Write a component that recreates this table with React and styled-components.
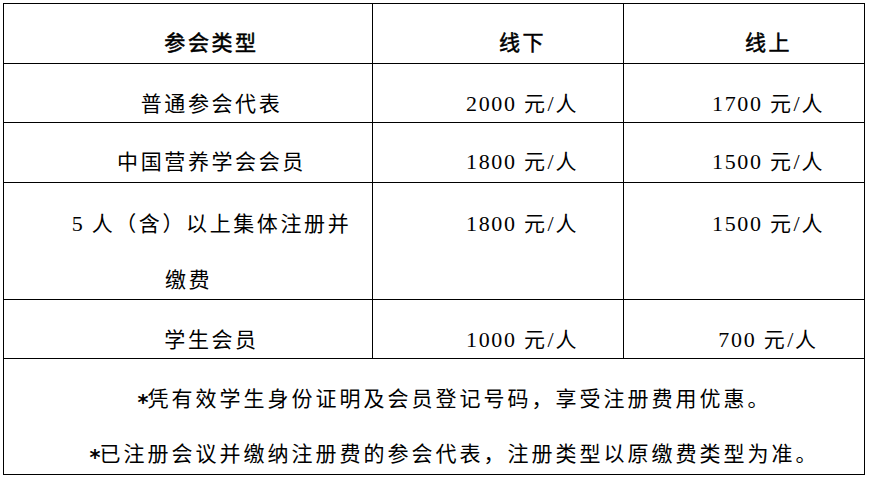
import React from "react";
import styled, { createGlobalStyle } from "styled-components";

const Global = createGlobalStyle`
  html, body { margin: 0; padding: 0; background: #fff; }
  body { font-family: "Noto Sans CJK SC", sans-serif; color: #000; }
`;

const Page = styled.div`
  padding: 3px 0 0 3px;
`;

const Table = styled.div`
  display: grid;
  width: 862px;
  box-sizing: border-box;
  grid-template-columns: 368px 250px 240px;
  grid-template-rows: 59px 58px 59px 116px 58px 115px;
  gap: 1px;
  padding: 1px;
  background: #000;
`;

const Cell = styled.div`
  background: #fff;
  box-sizing: border-box;
  padding: ${(p) => p.$top}px 0 0 ${(p) => p.$indent}px;
  grid-column: ${(p) => (p.$full ? "1 / -1" : "auto")};
  font-family: "Noto Sans CJK SC", sans-serif;
  font-size: 21px;
  line-height: 55px;
  letter-spacing: ${(p) => (p.$full ? 3 : 2.6)}px;
  text-align: center;
  white-space: nowrap;
  font-weight: 400;
  -webkit-text-stroke: ${(p) => (p.$head ? "0.5px #000" : "0")};
`;

const Line = styled.div`
  text-align: ${(p) => (p.$left ? "left" : "center")};
  padding-left: ${(p) => p.$offset || 0}px;
`;

const Num = styled.span`
  font-family: "Liberation Serif", "Times New Roman", serif;
  font-size: 22px;
  letter-spacing: 1.7px;
`;

const Star = styled.span`
  font-family: "DejaVu Sans", sans-serif;
  font-weight: 700;
  font-size: 21px;
  line-height: 0;
  vertical-align: -4px;
  letter-spacing: -1px;
`;

const Price = ({ value }) => (
  <>
    <Num>{value} </Num>元<Num>/</Num>人
  </>
);

const rows = [
  ["普通参会代表", "2000", "1700", 11],
  ["中国营养学会会员", "1800", "1500", 10],
  [null, "1800", "1500", 12],
  ["学生会员", "1000", "700", 11],
];

export default function App() {
  return (
    <Page>
      <Global />
      <Table>
        <Cell $top={10} $indent={47} $head>参会类型</Cell>
        <Cell $top={10} $indent={49} $head>线下</Cell>
        <Cell $top={10} $indent={49} $head>线上</Cell>
        {rows.map((r, i) => (
          <React.Fragment key={i}>
            <Cell $top={r[3]} $indent={47}>
              {r[0] === null ? (
                <>
                  <Line><Num>5 </Num>人（含）以上集体注册并</Line>
                  <Line $left $offset={114}>缴费</Line>
                </>
              ) : (
                r[0]
              )}
            </Cell>
            <Cell $top={r[3]} $indent={49}><Price value={r[1]} /></Cell>
            <Cell $top={r[3]} $indent={49}><Price value={r[2]} /></Cell>
          </React.Fragment>
        ))}
        <Cell $top={11} $indent={41} $full>
          <Line><Star>*</Star>凭有效学生身份证明及会员登记号码，享受注册费用优惠。</Line>
          <Line><Star>*</Star>已注册会议并缴纳注册费的参会代表，注册类型以原缴费类型为准。</Line>
        </Cell>
      </Table>
    </Page>
  );
}
